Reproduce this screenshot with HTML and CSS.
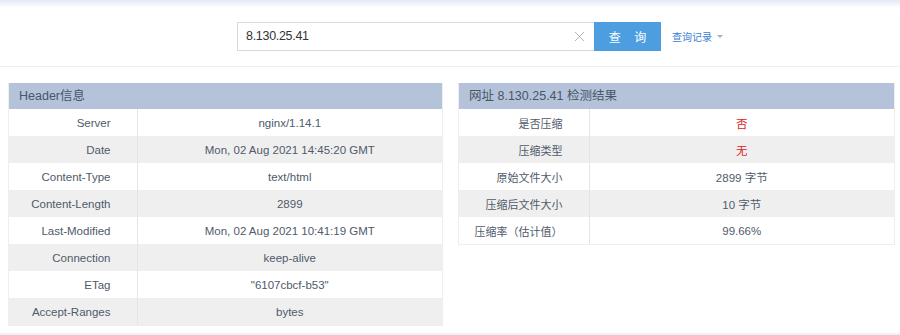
FILE: index.html
```html
<!DOCTYPE html>
<html lang="zh-CN">
<head>
    <meta charset="UTF-8">
    <title>网页GZIP压缩检测</title>
    <link rel="stylesheet" href="styles.css">
</head>
<body>
    <div class="top-strip"></div>

    <div class="search-bar">
        <div class="search-input">
            <span class="search-text">8.130.25.41</span>
            <svg class="clear-icon" viewBox="0 0 12 12" fill="none" stroke="currentColor">
                <path d="M1 1l10 10M11 1L1 11" stroke-width="1" />
            </svg>
        </div>
        <button class="search-button">查 询</button>
        <a class="history-link">查询记录<span class="caret"></span></a>
    </div>

    <div class="panels">
        <div class="panel">
            <div class="panel-title">Header信息</div>
            <table class="info-table">
                <tr><td class="label">Server</td><td>nginx/1.14.1</td></tr>
                <tr><td class="label">Date</td><td>Mon, 02 Aug 2021 14:45:20 GMT</td></tr>
                <tr><td class="label">Content-Type</td><td>text/html</td></tr>
                <tr><td class="label">Content-Length</td><td>2899</td></tr>
                <tr><td class="label">Last-Modified</td><td>Mon, 02 Aug 2021 10:41:19 GMT</td></tr>
                <tr><td class="label">Connection</td><td>keep-alive</td></tr>
                <tr><td class="label">ETag</td><td>"6107cbcf-b53"</td></tr>
                <tr><td class="label">Accept-Ranges</td><td>bytes</td></tr>
            </table>
        </div>

        <div class="panel">
            <div class="panel-title">网址 8.130.25.41 检测结果</div>
            <table class="info-table cn">
                <tr><td class="label">是否压缩</td><td class="red">否</td></tr>
                <tr><td class="label">压缩类型</td><td class="red">无</td></tr>
                <tr><td class="label">原始文件大小</td><td>2899 字节</td></tr>
                <tr><td class="label">压缩后文件大小</td><td>10 字节</td></tr>
                <tr><td class="label">压缩率（估计值）</td><td>99.66%</td></tr>
            </table>
        </div>
    </div>

    <div class="footer-line"></div>
</body>
</html>
```

FILE: styles.css
```css
* {
    margin: 0;
    padding: 0;
    box-sizing: border-box;
}

body {
    font-family: "Liberation Sans", "Noto Sans CJK SC", sans-serif;
    background-color: #fff;
    color: #505a6a;
    width: 900px;
    height: 335px;
    overflow: hidden;
}

.top-strip {
    height: 7px;
    background: linear-gradient(#e3eaf3, #fbfcfe);
}

.search-bar {
    display: flex;
    align-items: center;
    height: 60px;
    padding-left: 237px;
    padding-bottom: 1px;
    border-bottom: 1px solid #eef0f3;
}

.search-input {
    display: flex;
    align-items: center;
    justify-content: space-between;
    width: 357px;
    height: 29px;
    border: 1px solid #d6dae0;
    border-right: none;
    padding: 0 9px 0 8px;
}

.search-text {
    font-size: 12.5px;
    letter-spacing: -0.3px;
    color: #333;
}

.clear-icon {
    width: 11px;
    height: 11px;
    color: #aab0b8;
}

.search-button {
    width: 67px;
    height: 29px;
    border: none;
    background-color: #4c9ee0;
    color: #fff;
    font-family: inherit;
    font-size: 12px;
    word-spacing: 10px;
}

.history-link {
    display: inline-flex;
    align-items: center;
    margin-left: 11px;
    font-size: 10px;
    color: #3c80d0;
}

.caret {
    margin-left: 5px;
    border-left: 3px solid transparent;
    border-right: 3px solid transparent;
    border-top: 3px solid #aab0b8;
}

.panels {
    display: grid;
    grid-template-columns: 435px 437px;
    gap: 15px;
    padding: 16px 0 0 8px;
    align-items: start;
}

.panel {
    border: 1px solid #eceef2;
    border-top: none;
}

.panel-title {
    height: 26px;
    line-height: 26px;
    padding-left: 10px;
    background-color: #b4c3da;
    font-size: 12.5px;
    color: #4a5568;
}

.info-table {
    width: 100%;
    table-layout: fixed;
    border-collapse: collapse;
    font-size: 11.5px;
}

.info-table td {
    height: 27px;
    text-align: center;
    white-space: nowrap;
    border-left: 1px solid #e3e5e8;
}

.info-table td.label {
    width: 128px;
    text-align: right;
    padding-right: 26px;
    border-left: none;
}

.info-table.cn td.label {
    width: 130px;
    font-size: 11px;
}

.info-table tr:nth-child(even) {
    background-color: #efefef;
}

.info-table td.red {
    color: #e02020;
}

.footer-line {
    margin-top: 7px;
    border-top: 2px solid #eef1f5;
}
```
